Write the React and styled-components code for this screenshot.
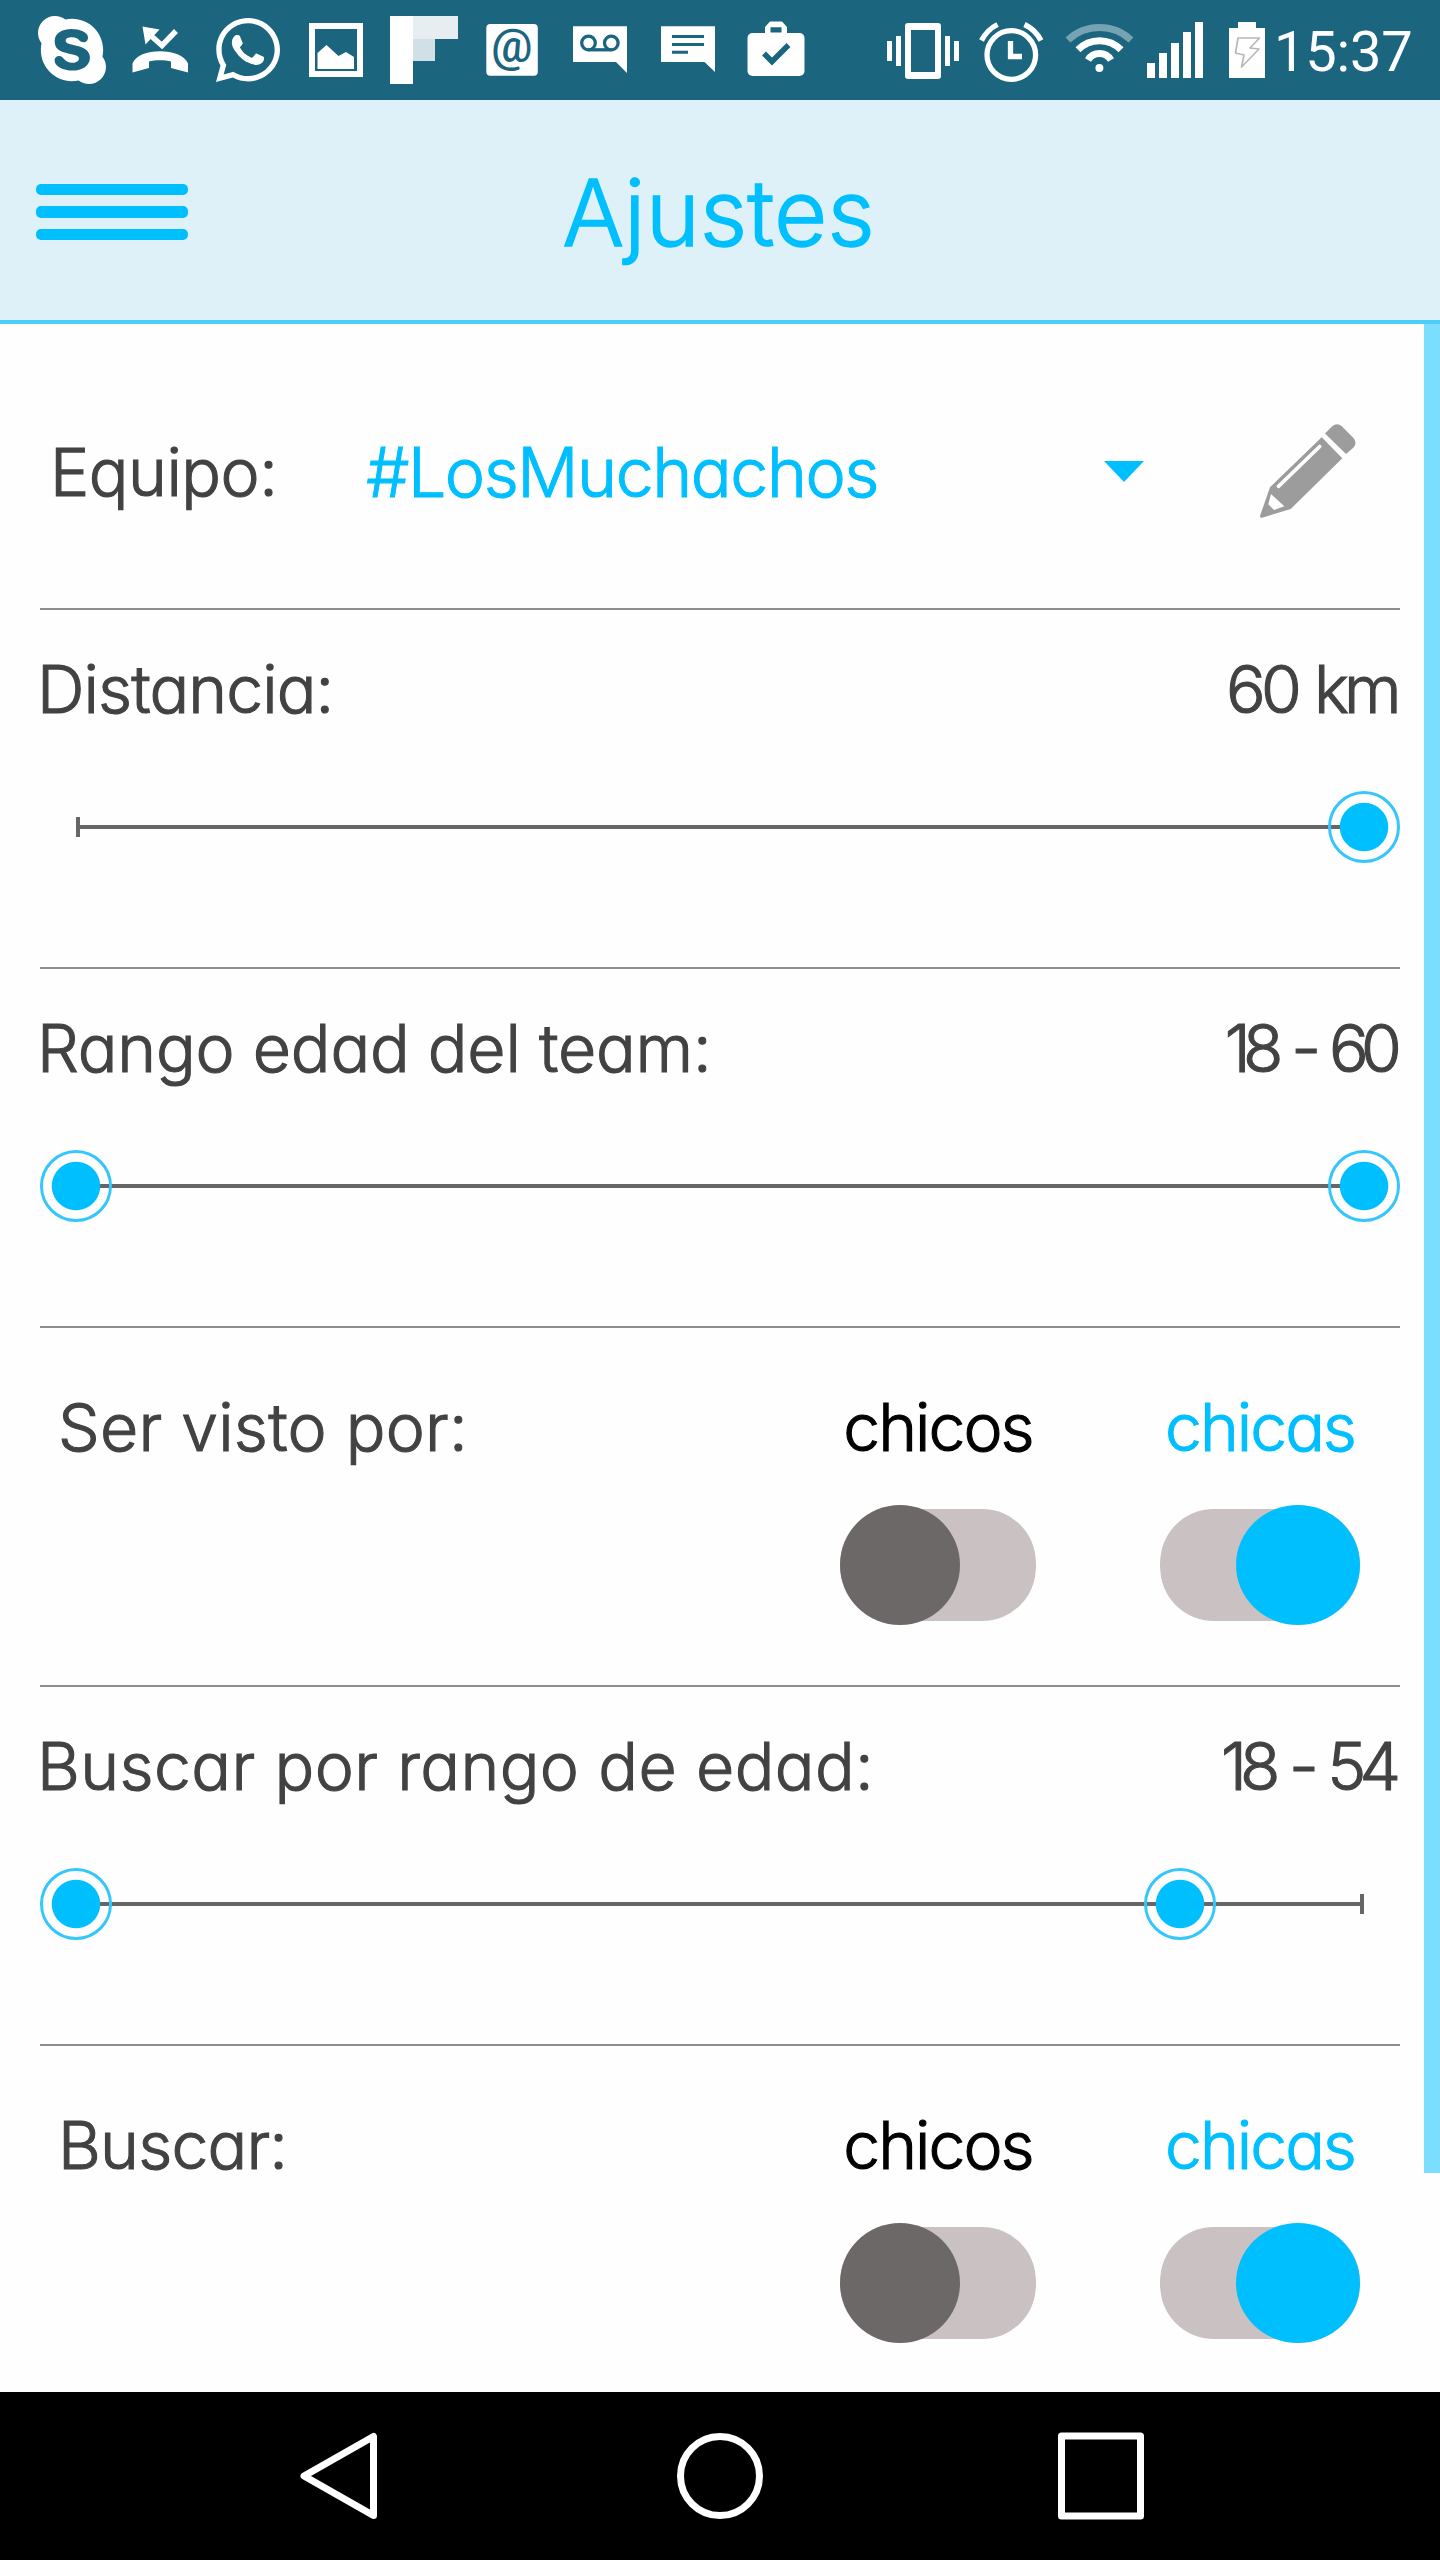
import React from "react";
import styled, { createGlobalStyle } from "styled-components";
import { FaSkype, FaWhatsapp } from "react-icons/fa";

const accent = "#00bfff";
const bar = "#1b657f";
const ink = "#424242";
const paper = "#fefefe";

const GlobalStyle = createGlobalStyle`
  *, *::before, *::after { box-sizing: border-box; }
  body { margin: 0; background: ${paper}; }
`;

const Screen = styled.div`
  display: flex;
  flex-direction: column;
  width: 1440px;
  height: 2560px;
  overflow: hidden;
  background: ${paper};
  font-family: Inter, "Liberation Sans", sans-serif;
  font-weight: 300;
  font-feature-settings: "cv11", "ss03";
`;

const StatusBar = styled.div`
  display: flex;
  flex: none;
  height: 100px;
  background: ${bar};
  color: #fff;
`;

const Glyph = styled.svg`
  display: block;
  flex: none;
  height: 100px;
  margin-left: ${(p) => p.$gap}px;
`;

const Clock = styled.span`
  margin-left: 8px;
  font: 400 56px/104px Roboto, sans-serif;
  letter-spacing: -0.2px;
`;

const Header = styled.header`
  display: grid;
  grid-template-columns: 1fr auto 1fr;
  align-items: center;
  flex: none;
  height: 224px;
  padding: 0 39px 0 36px;
  background: #def1f9;
  border-bottom: 4px solid #4bcffa;
`;

const Burger = styled.button`
  display: flex;
  flex-direction: column;
  gap: 11px;
  width: 152px;
  margin: 4px 0 0;
  padding: 0;
  border: 0;
  background: none;
`;

const BurgerLine = styled.span`
  height: 11.500px;
  border-radius: 5px;
  background: ${accent};
`;

const Title = styled.h1`
  margin: 5px 0 0;
  font-size: 92px;
  line-height: 120px;
  font-weight: 300;
  letter-spacing: 0;
  -webkit-text-stroke: 1.4px ${accent};
  color: ${accent};
`;

const Body = styled.main`
  display: flex;
  flex: 1;
  min-height: 0;
`;

const Content = styled.div`
  flex: 1;
  padding: 0 24px 0 40px;
`;

const Scrollbar = styled.div`
  flex: none;
  width: 16px;
  height: 1849px;
  background: #7bdeff;
`;

const Section = styled.section`
  height: ${(p) => p.$height || 359}px;
  border-bottom: ${(p) => (p.$last ? 0 : 2)}px solid #8e8e8e;
`;

const TeamRow = styled.div`
  display: flex;
  align-items: center;
  height: 284px;
  padding: 10px 44px 0 10px;
`;

const Text = styled.span`
  padding-top: 1px;
  font-size: ${(p) => p.$size || 66}px;
  line-height: 80px;
  letter-spacing: ${(p) => p.$track || 0}px;
  word-spacing: ${(p) => p.$words || 0}px;
  -webkit-text-stroke: 1.1px currentColor;
  color: ${(p) => p.$color || ink};
  white-space: pre;
`;

const TeamSelect = styled.div`
  display: flex;
  flex: 1;
  align-items: center;
  justify-content: space-between;
  margin: 0 116px 0 89px;
`;

const Caret = styled.span`
  border: 20px solid transparent;
  border-top: 21px solid ${accent};
  border-bottom: 0;
`;

const SliderHead = styled.div`
  display: flex;
  align-items: center;
  justify-content: space-between;
  height: 156px;
  margin-left: -3px;
  padding-right: ${(p) => p.$inset}px;
`;

const Slider = styled.div`
  position: relative;
  height: 72px;
  margin: 25px 36px 0;
`;

const Track = styled.div`
  height: 20px;
  border: solid #666;
  border-width: 0 4px;
  transform: translateY(26px);
  background: linear-gradient(#666, #666) center / 100% 4px no-repeat;
`;

const Thumb = styled.div`
  position: absolute;
  top: 0;
  width: 72px;
  height: 72px;
  margin-left: -36px;
  border: 3px solid #36c6fb;
  border-radius: 50%;
  background: radial-gradient(circle, ${accent} 23.7px, transparent 24.7px);
`;

const ToggleRow = styled.div`
  display: flex;
  align-items: flex-start;
  padding: 58px 40px 0 18px;
`;

const ToggleLabel = styled.div`
  display: flex;
  flex: 1;
`;

const Option = styled.div`
  display: flex;
  flex-direction: column;
  align-items: center;
  gap: 38px;
  width: ${(p) => p.$width}px;
  margin-left: ${(p) => p.$gap || 0}px;
`;

const Switch = styled.div`
  display: flex;
  align-items: center;
  justify-content: ${(p) => (p.$on ? "flex-end" : "flex-start")};
  width: 100%;
  height: 120px;
  background: linear-gradient(#c9c1c2, #c9c1c2);
  background-clip: padding-box;
  border: solid transparent;
  border-width: 4px 0;
  border-radius: 54px / 58px;
`;

const Knob = styled.div`
  flex: none;
  width: ${(p) => (p.$on ? 124 : 120)}px;
  height: 120px;
  border-radius: 50%;
  background: ${(p) => (p.$on ? accent : "#6c6867")};
`;

const NavBar = styled.nav`
  display: flex;
  align-items: center;
  flex: none;
  height: 168px;
  background: #000;
`;

const NavIcon = styled.svg`
  display: block;
  width: 88px;
  height: 88px;
  margin-left: ${(p) => p.$gap}px;
  fill: none;
  stroke: #fff;
  stroke-width: 7;
  stroke-linejoin: round;
`;

function StatusIcons() {
  return (
    <>
      <Glyph $gap={38} width="68" viewBox="38 0 68 100">
        <FaSkype x="33.15" y="11.15" size={77.7} />
      </Glyph>
      <Glyph $gap={26} width="56" viewBox="132 0 56 100" fill="#fff">
        <path d="M142.5 26.5 159.5 29.5 145.5 44.5Z" />
        <path d="M149 34 162 45.5 176 31" fill="none" stroke="#fff" strokeWidth="5.5" />
        <path d="M132.5 72.500V63.500C138 47,182 47,188 63.500V72.500L171 68V61.500C165 59.700,155 59.700,149 61.500V68Z" />
      </Glyph>
      <Glyph $gap={28} width="64" viewBox="216 0 64 100">
        <FaWhatsapp x="211.45" y="13.45" size={73.1} />
      </Glyph>
      <Glyph $gap={29} width="54" viewBox="309 0 54 100" fill="#fff">
        <path fillRule="evenodd" d="M309 23h54v54h-54ZM315 29v42h42v-42Z" />
        <path d="M317.5 53 326.5 45 338.5 56 346 52 354 57V69H317.500Z" />
      </Glyph>
      <Glyph $gap={27} width="68" viewBox="390 0 68 100">
        <path fill="#fff" d="M390 16h23v68h-23Z" />
        <path fill="#e7eef2" d="M413 16h45v23h-45Z" />
        <path fill="#d1dfe6" d="M413 39h22v22h-22Z" />
      </Glyph>
      <Glyph $gap={28} width="52" viewBox="486 0 52 100">
        <rect x="486.300" y="24" width="51.500" height="51.700" rx="4" fill="#fff" />
        <text x="512" y="62" textAnchor="middle" fontFamily="Roboto, sans-serif" fontWeight="500" fontSize="46" fill={bar}>@</text>
      </Glyph>
      <Glyph $gap={35} width="54" viewBox="573 0 54 100">
        <path fill="#fff" d="M573 26.300H627V73L616 62H573Z" />
        <g fill="none" stroke={bar} strokeWidth="3.300">
          <circle cx="588.500" cy="43" r="6.800" />
          <circle cx="611.300" cy="43" r="6.800" />
          <path d="M588.500 49.800H611.300" />
        </g>
      </Glyph>
      <Glyph $gap={34} width="54" viewBox="661 0 54 100">
        <path fill="#fff" d="M661 26.300H715V72L704.500 62H661Z" />
        <path stroke={bar} strokeWidth="3" d="M672 36.500H704M672 44.500H704M672 52.200H688" />
      </Glyph>
      <Glyph $gap={32} width="58" viewBox="747 0 58 100">
        <rect x="747.500" y="33" width="57" height="43" rx="5" fill="#fff" />
        <path fill="#fff" fillRule="evenodd" d="M765 34V27L770 21.500H782L787 27V34ZM770.500 27.300V32.500H781.500V27.300Z" />
        <path d="M764 53.500 772 61.500 788.500 45" fill="none" stroke={bar} strokeWidth="5.500" />
      </Glyph>
      <Glyph $gap={82} width="73" viewBox="887 0 73 100" fill="#fff">
        <path fillRule="evenodd" d="M908 23H938Q941 23 941 26V76Q941 79 938 79H908Q905 79 905 76V26Q905 23 908 23ZM911 30V72H935V30Z" />
        <path d="M887 41h5v20h-5ZM896 36h5v30h-5ZM945 36h5v30h-5ZM954 41h5v20h-5Z" />
      </Glyph>
      <Glyph $gap={19} width="65" viewBox="979 0 65 100" fill="none" stroke="#fff" strokeWidth="5.300">
        <circle cx="1011.300" cy="55" r="24.300" />
        <path d="M1010.500 41V56.500H1022" />
        <path d="M981.500 40.500A36 36 0 0 1 997.500 24.500M1024.500 24.500A36 36 0 0 1 1041 40.500" />
      </Glyph>
      <Glyph $gap={21} width="70" viewBox="1065 0 70 100" fill="none" stroke="#fff" strokeWidth="7">
        <path d="M1068 40A46 46 0 0 1 1131 40" opacity=".4" />
        <path d="M1078 49.800A30 30 0 0 1 1121 49.800M1088 60A13.500 13.500 0 0 1 1111 60" />
        <circle cx="1099.400" cy="68" r="4" fill="#fff" stroke="none" />
      </Glyph>
      <Glyph $gap={12} width="56" viewBox="1147 0 56 100" fill="#fff">
        <path d="M1147 63h8v15h-8ZM1159 53h8v25h-8ZM1171 43h8v35h-8ZM1183 32h8v46h-8ZM1195 22h8v56h-8Z" />
      </Glyph>
      <Glyph $gap={26} width="37" viewBox="1229 0 37 100">
        <path fill="#fff" d="M1238 22H1256V28H1265V78H1229V28H1238Z" />
        <path fill="none" stroke="#b8b8b8" strokeWidth="1.700" strokeLinejoin="round" d="M1238 38H1259.500L1250 48L1259 49L1241.500 67L1244 55L1235.500 53Z" />
      </Glyph>
    </>
  );
}

function PencilIcon() {
  return (
    <svg width="96" height="96" viewBox="1260 424 96 96" fill="#9c9c9c">
      <path d="M1325 434.500 1332 427.500Q1337 423 1342 427.500L1353 438.500Q1358 444 1353 449L1346 455Z" />
      <path fillRule="evenodd" d="M1321.700 438.300 1342.300 459.300 1290.700 510 1262 518.800Q1259.500 519.300 1260.300 516L1270 488.300ZM1271 495 1268.300 505.300 1274 511 1284.300 507.300Z" />
      <path d="M1278.500 487.300 1319.700 447.500" stroke={paper} strokeWidth="3.700" strokeLinecap="round" />
    </svg>
  );
}

function RangeSetting({ label, value, track, valueTrack, valueWords, inset, thumbs }) {
  return (
    <Section>
      <SliderHead $inset={inset}>
        <Text $track={track}>{label}</Text>
        <Text $track={valueTrack} $words={valueWords}>{value}</Text>
      </SliderHead>
      <Slider>
        <Track />
        {thumbs.map((t) => (
          <Thumb key={t} style={{ left: `${t * 100}%` }} />
        ))}
      </Slider>
    </Section>
  );
}

function GenderSetting({ label, track, last }) {
  return (
    <Section $last={last}>
      <ToggleRow>
        <ToggleLabel>
          <Text $track={track}>{label}</Text>
        </ToggleLabel>
        <Option $width={196}>
          <Text $color="#000" $track={-2}>chicos</Text>
          <Switch><Knob /></Switch>
        </Option>
        <Option $width={200} $gap={124}>
          <Text $color={accent} $track={-2}>chicas</Text>
          <Switch $on><Knob $on /></Switch>
        </Option>
      </ToggleRow>
    </Section>
  );
}

export default function App() {
  return (
    <Screen>
      <GlobalStyle />
      <StatusBar>
        <StatusIcons />
        <Clock>15:37</Clock>
      </StatusBar>
      <Header>
        <Burger aria-label="Menú">
          <BurgerLine />
          <BurgerLine />
          <BurgerLine />
        </Burger>
        <Title>Ajustes</Title>
      </Header>
      <Body>
        <Content>
          <Section $height={286}>
            <TeamRow>
              <Text $track={-0.5}>Equipo:</Text>
              <TeamSelect>
                <Text $size={68} $color={accent} $track={-1.45}>#LosMuchachos</Text>
                <Caret />
              </TeamSelect>
              <PencilIcon />
            </TeamRow>
          </Section>
          <RangeSetting label="Distancia:" value="60 km" track={-0.9} valueTrack={-4.7} valueWords={3} inset={3} thumbs={[1]} />
          <RangeSetting label="Rango edad del team:" value="18 - 60" track={-0.2} valueTrack={-7.8} valueWords={5} inset={6} thumbs={[0, 1]} />
          <GenderSetting label="Ser visto por:" track={0.25} />
          <RangeSetting label="Buscar por rango de edad:" value="18 - 54" track={0.4} valueTrack={-7} valueWords={4} inset={6} thumbs={[0, 36 / 42]} />
          <GenderSetting label="Buscar:" track={-0.8} last />
        </Content>
        <Scrollbar />
      </Body>
      <NavBar>
        <NavIcon $gap={298} viewBox="298 2432 88 88">
          <path d="M304 2476 373.500 2436.500V2515.500Z" />
        </NavIcon>
        <NavIcon $gap={290} viewBox="676 2432 88 88">
          <circle cx="720" cy="2476" r="39.500" />
        </NavIcon>
        <NavIcon $gap={294} viewBox="1058 2432 88 88">
          <path d="M1061.500 2436h79v80h-79Z" />
        </NavIcon>
      </NavBar>
    </Screen>
  );
}
